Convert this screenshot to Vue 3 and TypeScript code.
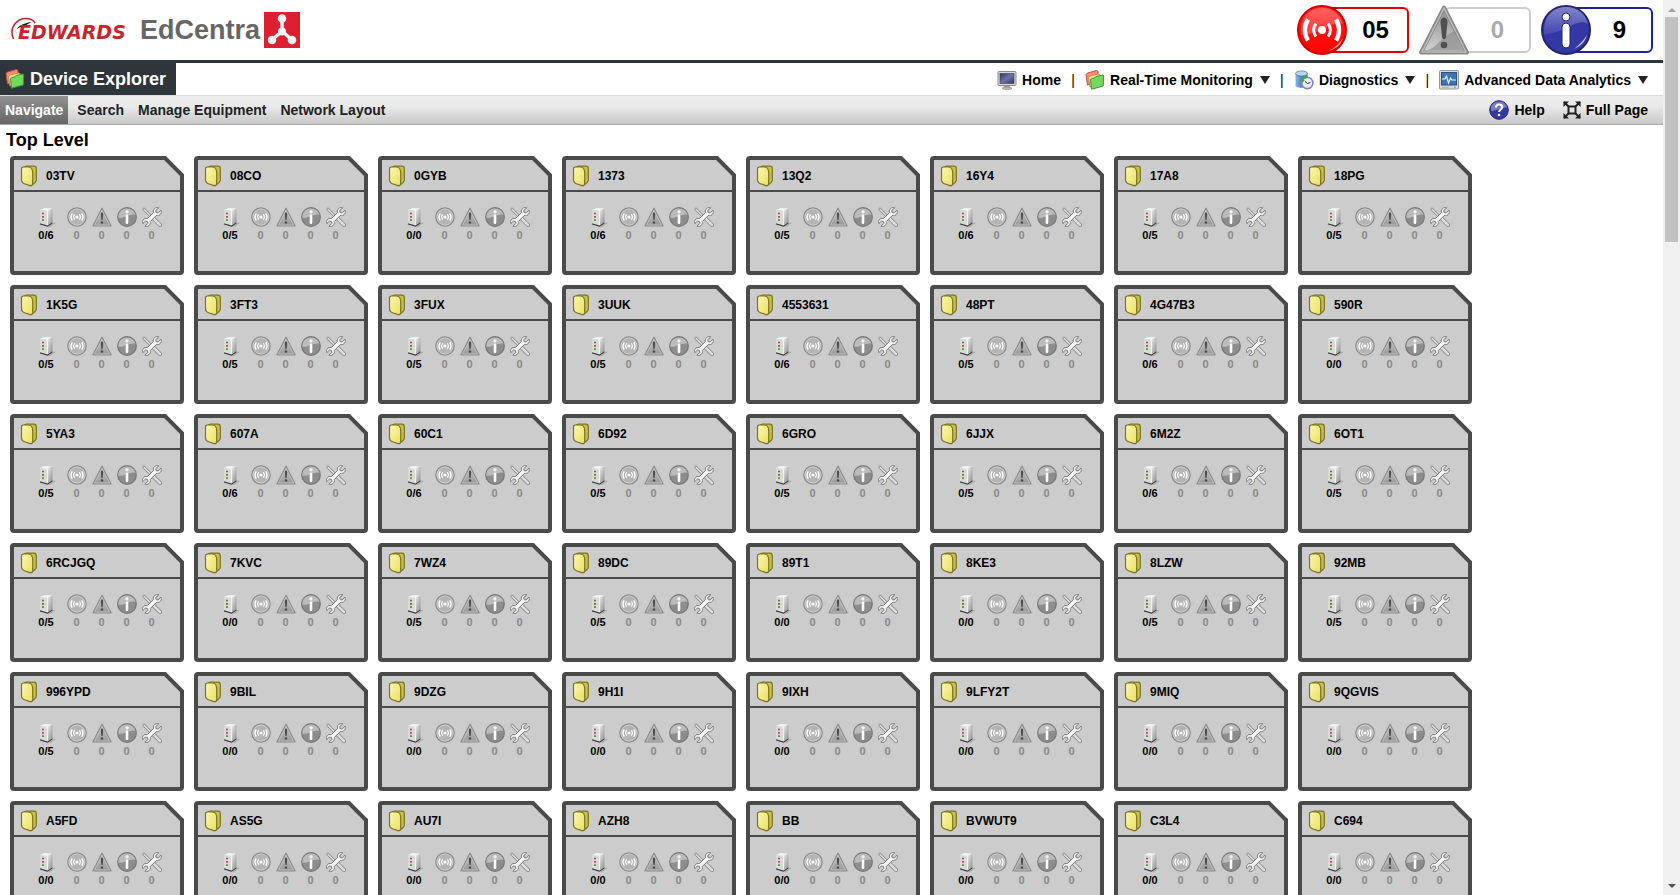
<script setup lang="ts">
interface Device {
  name: string
  online: string
}

const rows: string[] = [
  '03TV:6 08CO:5 0GYB:0 1373:6 13Q2:5 16Y4:6 17A8:5 18PG:5',
  '1K5G:5 3FT3:5 3FUX:5 3UUK:5 4553631:6 48PT:5 4G47B3:6 590R:0',
  '5YA3:5 607A:6 60C1:6 6D92:5 6GRO:5 6JJX:5 6M2Z:6 6OT1:5',
  '6RCJGQ:5 7KVC:0 7WZ4:5 89DC:5 89T1:0 8KE3:0 8LZW:5 92MB:5',
  '996YPD:5 9BIL:0 9DZG:0 9H1I:0 9IXH:0 9LFY2T:0 9MIQ:0 9QGVIS:0',
  'A5FD:0 AS5G:0 AU7I:0 AZH8:0 BB:0 BVWUT9:0 C3L4:0 C694:0',
]

const devices: Device[] = rows
  .flatMap((row) => row.split(' '))
  .map((entry) => {
    const [name, total] = entry.split(':')
    return { name, online: `0/${total}` }
  })

const counters: string[] = ['alarm', 'warning', 'info', 'tools']

const alerts = [
  { kind: 'alarm', label: 'Alarms', count: '05' },
  { kind: 'warning', label: 'Warnings', count: '0' },
  { kind: 'info', label: 'Advisories', count: '9' },
]

const menus = [
  { icon: 'folders', label: 'Real-Time Monitoring' },
  { icon: 'database', label: 'Diagnostics' },
  { icon: 'analytics', label: 'Advanced Data Analytics' },
]

const tabs: string[] = ['Navigate', 'Search', 'Manage Equipment', 'Network Layout']
</script>

<template>
  <svg class="sprite" width="0" height="0" aria-hidden="true">
    <defs>
      <linearGradient id="g-red" x1="0" y1="0" x2="0" y2="1">
        <stop offset="0" stop-color="#ff3a3a" /><stop offset=".45" stop-color="#ff1414" /><stop offset="1" stop-color="#f00" />
      </linearGradient>
      <linearGradient id="g-blue" x1="0" y1="0" x2="0" y2="1">
        <stop offset="0" stop-color="#9496d4" /><stop offset="1" stop-color="#4a4db4" />
      </linearGradient>
      <linearGradient id="g-gray" x1="0" y1="0" x2="0" y2="1">
        <stop offset="0" stop-color="#8f8f8f" /><stop offset="1" stop-color="#d2d2d2" />
      </linearGradient>
      <linearGradient id="g-silver" x1="0" y1="0" x2="0" y2="1">
        <stop offset="0" stop-color="#c4c4c4" /><stop offset="1" stop-color="#999" />
      </linearGradient>
      <linearGradient id="g-side" x1="0" y1="0" x2="1" y2="1">
        <stop offset="0" stop-color="#eee" /><stop offset="1" stop-color="#8a8a8a" />
      </linearGradient>
      <linearGradient id="g-screen" x1="0" y1="0" x2="1" y2="1">
        <stop offset="0" stop-color="#34346a" /><stop offset=".5" stop-color="#6f72a8" /><stop offset="1" stop-color="#30305f" />
      </linearGradient>
      <linearGradient id="g-yellow" x1="0" y1="0" x2="1" y2="1">
        <stop offset="0" stop-color="#fbf8b0" /><stop offset="1" stop-color="#e9df66" />
      </linearGradient>
      <linearGradient id="g-cyl" x1="0" y1="0" x2="1" y2="0">
        <stop offset="0" stop-color="#8ab6e0" /><stop offset=".4" stop-color="#5b8fc8" /><stop offset="1" stop-color="#2c5c98" />
      </linearGradient>
    </defs>

    <symbol id="big-alarm" viewBox="0 0 50 50">
      <circle cx="25" cy="25" r="24" fill="url(#g-red)" stroke="#d40000" stroke-width="2" />
      <path d="M4 22C7 9 15 3 25 3s18 6 21 16C35 15 24 30 4 30z" fill="#fff" opacity=".2" />
      <path d="M32 46c7-2 12-6 14-13-4 6-8 9-14 13z" fill="#fff" opacity=".6" />
      <circle cx="25" cy="25" r="4" fill="#fff" />
      <path d="M19 18.500a10 10 0 0 0 0 13M31 18.500a10 10 0 0 1 0 13" fill="none" stroke="#fff" stroke-width="3" />
      <path d="M11 14.500a20 20 0 0 0 0 21M39 14.500a20 20 0 0 1 0 21" fill="none" stroke="#fff" stroke-width="4.500" />
    </symbol>
    <symbol id="big-warning" viewBox="0 0 50 50">
      <path d="M25 2.500L48 47.500H2z" fill="url(#g-gray)" stroke="#8a8a8a" stroke-width="4" stroke-linejoin="round" />
      <path d="M25 3L47 47H3z" fill="none" stroke="#bdbdbd" stroke-width="1.500" stroke-linejoin="round" />
      <path d="M36 26l9 19H9c10-3 11-12 27-19z" fill="#8b8b8b" opacity=".65" />
      <path d="M21.500 17c0-6 7-6 7 0l-1.500 15c-.5 3-3.500 3-4 0z" fill="#505050" />
      <circle cx="25" cy="40" r="3.300" fill="#505050" />
    </symbol>
    <symbol id="big-info" viewBox="0 0 50 50">
      <circle cx="25" cy="25" r="24" fill="#3338a4" stroke="#24246e" stroke-width="2" />
      <path d="M3 29C2 11 12 2 25 2s20 8 22 17C36 12 25 29 3 29z" fill="url(#g-blue)" opacity=".8" />
      <path d="M33 44c7-3 11-7 13-14-4 6-8 10-13 14z" fill="#b9bcf0" />
      <circle cx="25" cy="12" r="4" fill="#fff" stroke="#25266f" />
      <rect x="21" y="18" width="8" height="25" rx="4" fill="#fff" stroke="#25266f" />
    </symbol>

    <symbol id="small-alarm" viewBox="0 0 20 20">
      <circle cx="10" cy="10" r="9.200" fill="#b4b4b4" stroke="#8d8d8d" stroke-width="1.300" />
      <circle cx="10" cy="10" r="8" fill="none" stroke="#d0d0d0" stroke-width=".8" />
      <circle cx="10" cy="10" r="1.600" fill="#fff" />
      <path d="M7.700 7.400a4 4 0 0 0 0 5.200M12.300 7.400a4 4 0 0 1 0 5.200" fill="none" stroke="#fff" stroke-width="1.200" />
      <path d="M5.200 6.300a7 7 0 0 0 0 7.400M14.800 6.300a7 7 0 0 1 0 7.400" fill="none" stroke="#fff" stroke-width="1.400" />
    </symbol>
    <symbol id="small-warning" viewBox="0 0 20 20">
      <path d="M10 1.300L19 18.800H1z" fill="url(#g-silver)" stroke="#8c8c8c" stroke-width="1.300" stroke-linejoin="round" />
      <path d="M10 3.500L17.500 18H2.500z" fill="none" stroke="#c9c9c9" stroke-width=".7" />
      <path d="M8.800 7c0-2 2.400-2 2.400 0l-.5 5.500c-.2 1-1.200 1-1.400 0z" fill="#4c4c4c" />
      <circle cx="10" cy="15.500" r="1.200" fill="#4c4c4c" />
    </symbol>
    <symbol id="small-info" viewBox="0 0 20 20">
      <circle cx="10" cy="10" r="9.300" fill="#8d8d8d" stroke="#777" stroke-width="1.200" />
      <path d="M1.500 11C1 5 5 1.500 10 1.500S18 5 18.500 8C14 6 9 11 1.500 11z" fill="#bcbcbc" />
      <circle cx="10" cy="4.800" r="1.600" fill="#f4f4f4" />
      <rect x="8.700" y="7.500" width="2.600" height="9.500" rx="1.300" fill="#fff" />
    </symbol>
    <symbol id="small-tools" viewBox="0 0 20 20">
      <path d="M2 2.200l9 9" stroke="#858585" stroke-width="3" stroke-linecap="round" />
      <path d="M2 2.200l9 9" stroke="#e4e4e4" stroke-width="1.400" stroke-linecap="round" />
      <path d="M12 12l6 6" stroke="#858585" stroke-width="4" stroke-linecap="round" />
      <path d="M12 12l6 6" stroke="#dcdcdc" stroke-width="2.500" stroke-linecap="round" />
      <path d="M16.800 .8l-3 2.700 .3 2.200 2.200.3 2.700-2.900c1.200 3.600-1.600 6-4.700 5.400L8.300 14.500c.8 3-1.800 5.700-5.300 4.700l2.800-2.800-.4-2-2-.4L.7 16.700c-1-3.300 1.400-5.900 4.600-5.100L11.400 5.500C10.800 2.300 13.300-.2 16.800 .8z" fill="#f4f4f4" stroke="#777" stroke-width="1" stroke-linejoin="round" />
    </symbol>
    <symbol id="server" viewBox="0 0 20 20">
      <path d="M12 19.500l6.500-4 1 .4-5.500 4z" fill="#888" opacity=".5" />
      <path d="M4 3L8.500 1l8 .6-5 2.400z" fill="#f5f5f5" />
      <path d="M4 3l7.500 1v14.500L4 16.500z" fill="#dadada" />
      <path d="M11.500 4l5-2.400v13.600l-5 3.300z" fill="url(#g-side)" />
      <path d="M11.500 4v14" stroke="#f8f8f8" stroke-width=".8" />
      <path d="M4 16.300l7.500 2.200 5-3.300v1.300l-5 3.300L4 17.500z" fill="#3c3c3c" />
      <path d="M6 6.500h2" stroke="#666" stroke-width="1.500" />
      <path d="M6 9.800h2" stroke="#c04a3c" stroke-width="1.800" />
      <path d="M6 13.200h2" stroke="#4a9c44" stroke-width="1.800" />
    </symbol>
    <symbol id="folder" viewBox="0 0 18 22">
      <path d="M4 2l2-.8h8c1.500 0 2.300 1 2.300 2.500V15c0 1-.3 1.500-1 2.200L12 20z" fill="#c9bd50" stroke="#7d7420" stroke-width="1.200" stroke-linejoin="round" />
      <path d="M3.500 2h4.700c3.300 0 4.500 3 4.500 6v10c0 2-1 3-2.800 2.600L4.500 18.700c-2-.7-3-1.700-3-3.700V4c0-1.300 .7-2 2-2z" fill="url(#g-yellow)" stroke="#7d7420" stroke-width="1.200" stroke-linejoin="round" />
    </symbol>

    <symbol id="folders" viewBox="0 0 20 20">
      <path d="M1 4.500L2.500 3l9-2.500 1.500 1V12L2.500 15z" fill="#f58c84" stroke="#c84840" />
      <path d="M3.500 7.500L5 6l8.500-2 2 1v9L5 17z" fill="#f9e191" stroke="#c8922f" />
      <path d="M5.500 9.500l1.500-1 3-.7 1-1.300L18 5l.7 1-.5 10L6.500 19.200z" fill="#73d95e" stroke="#38983a" />
    </symbol>
    <symbol id="home" viewBox="0 0 20 20">
      <rect x="1" y="1.500" width="18" height="14" rx="1" fill="#d7d7d2" stroke="#8b8b87" />
      <rect x="3" y="3.500" width="14" height="10" fill="url(#g-screen)" stroke="#40405b" stroke-width=".6" />
      <path d="M7.500 16h5l1 2h-7z" fill="#999" />
      <ellipse cx="10" cy="18.300" rx="5" ry="1.200" fill="#bbb" stroke="#888" stroke-width=".6" />
    </symbol>
    <symbol id="database" viewBox="0 0 20 20">
      <path d="M1.500 3.500v12c0 3 12 3 12 0v-12z" fill="url(#g-cyl)" />
      <ellipse cx="7.500" cy="3.500" rx="6" ry="2.600" fill="#b8d5ef" stroke="#4c7db6" stroke-width=".8" />
      <circle cx="13.300" cy="13" r="5.600" fill="#ececf8" stroke="#8485c5" stroke-width="1.600" />
      <path d="M8.300 10.500c.8-2.500 3-3.800 5-3.400" fill="none" stroke="#47ab3e" stroke-width="2" />
      <path d="M6.500 10h4.300l-2.500 3z" fill="#47ab3e" />
      <path d="M11 11.500l2.500 2 3-1" fill="none" stroke="#333" />
    </symbol>
    <symbol id="analytics" viewBox="0 0 20 20">
      <rect x=".5" y=".5" width="19" height="18.500" rx="1" fill="#dcd9d0" stroke="#989898" />
      <rect x="2.500" y="2.500" width="15" height="12.500" fill="#3f73b5" stroke="#285083" />
      <path d="M3 9h3l1.500-3L9.500 13l2-5 1.500 2h4" fill="none" stroke="#e8ffff" stroke-width="1.100" />
      <path d="M3 17.200h7" stroke="#aaa" /><path d="M15 17.200h2" stroke="#6a6" />
    </symbol>
    <symbol id="fullpage" viewBox="0 0 18 18">
      <g fill="none" stroke="#222">
        <rect x="5.500" y="5.500" width="7" height="7" stroke-width="2" />
        <path d="M1 1l4.500 4.500M17 1l-4.500 4.500M1 17l4.500-4.500M17 17l-4.500-4.500" stroke-width="2" />
      </g>
      <path d="M.5 .5h5.500l-5.500 5.500zM17.500 .5v5.500L12 .5zM17.500 17.500H12l5.500-5.500zM.5 17.500V12L6 17.500z" fill="#222" />
    </symbol>
  </svg>

  <div class="shell">
    <div class="page">
      <header class="masthead">
        <div class="brand">
          <svg class="edwards" width="122" height="28" viewBox="0 0 122 28" role="img" aria-label="Edwards">
            <path d="M3.500 23C-2 10 9 1.500 17 2.500c4 .5 6.500 2 8 4.500" fill="none" stroke="#c8242b" stroke-width="1.500" />
            <path d="M6.500 13c3-4 9-6.500 16-7-5 1.500-6 3-7 4.500-4 0-6.500 .8-9 2.500z" fill="#161616" />
            <text x="8" y="23" class="edwards-name">EDWARDS</text>
          </svg>
          <span class="product">EdCentra</span>
          <svg class="molecule" width="36" height="36" viewBox="0 0 36 36" aria-hidden="true">
            <rect width="36" height="36" fill="#dc1f31" />
            <path d="M18 7v12M18 19L8 28M18 19l10 9" stroke="#f4f4f4" stroke-width="3.500" />
            <g fill="#f4f4f4">
              <circle cx="18" cy="6.500" r="4.300" /><circle cx="18" cy="19.500" r="4" />
              <circle cx="8" cy="28" r="4.300" /><circle cx="28" cy="28" r="4.300" />
            </g>
          </svg>
        </div>
        <div class="alerts">
          <button v-for="a in alerts" :key="a.kind" type="button" class="alert" :class="a.kind" :aria-label="a.label">
            <svg class="alert-icon" width="50" height="50"><use :href="`#big-${a.kind}`" /></svg>
            <span class="alert-count">{{ a.count }}</span>
          </button>
        </div>
      </header>

      <div class="mainbar">
        <h1 class="section">
          <svg width="20" height="20"><use href="#folders" /></svg>Device Explorer
        </h1>
        <nav class="menus">
          <a href="#home" class="menu"><svg width="20" height="20"><use href="#home" /></svg>Home</a>
          <template v-for="m in menus" :key="m.label">
            <span class="bar">|</span>
            <button type="button" class="menu">
              <svg width="20" height="20"><use :href="`#${m.icon}`" /></svg>{{ m.label }}<i class="arrow"></i>
            </button>
          </template>
        </nav>
      </div>

      <div class="subbar">
        <nav class="tabs">
          <a v-for="(t, i) in tabs" :key="t" href="#tab" class="tab" :class="{ active: i === 0 }">{{ t }}</a>
        </nav>
        <div class="actions">
          <a href="#help" class="menu">
            <svg width="20" height="20" viewBox="0 0 20 20" aria-hidden="true">
              <circle cx="10" cy="10" r="9.300" fill="#3338a0" stroke="#25266f" />
              <path d="M2 11C1 5 5 1.500 10 1.500S18 5 18 8C14 6 9 11 2 11z" fill="#8a8dd0" opacity=".8" />
              <path d="M7 7.500c0-4 6.500-3.800 6.300-.4-.2 2.400-3.200 2.400-3.200 5" fill="none" stroke="#fff" stroke-width="2" />
              <circle cx="10" cy="15" r="1.300" fill="#fff" />
            </svg>Help
          </a>
          <button type="button" class="menu"><svg width="18" height="18"><use href="#fullpage" /></svg>Full Page</button>
        </div>
      </div>

      <main>
        <h2 class="level">Top Level</h2>
        <ul class="cards">
          <li v-for="d in devices" :key="d.name">
            <a href="#device" class="card">
              <svg class="outline" width="174" height="119" viewBox="0 0 174 119" aria-hidden="true">
                <path d="M4 2H155L172 19V115Q172 117 170 117H4Q2 117 2 115V4Q2 2 4 2z" fill="#ccc" stroke="#4a4a4a" stroke-width="4" />
                <path d="M3 35h168" stroke="#4a4a4a" stroke-width="2" />
              </svg>
              <span class="title"><svg width="18" height="22"><use href="#folder" /></svg>{{ d.name }}</span>
              <span class="stats">
                <span class="stat online"><svg width="20" height="20"><use href="#server" /></svg>{{ d.online }}</span>
                <span v-for="c in counters" :key="c" class="stat">
                  <svg width="20" height="20"><use :href="`#small-${c}`" /></svg>0
                </span>
              </span>
            </a>
          </li>
        </ul>
      </main>
    </div>

    <div class="scrollbar" aria-hidden="true">
      <i class="step up"></i>
      <i class="thumb"></i>
      <i class="step down"></i>
    </div>
  </div>
</template>

<style>
body {
  margin: 0;
  background: #fff;
}
</style>

<style scoped>
.sprite {
  position: absolute;
}
.shell {
  display: grid;
  grid-template-columns: minmax(0, 1fr) 17px;
  height: 100vh;
  overflow: hidden;
  font: bold 14px/20px "Liberation Sans", Arial, sans-serif;
  color: #000;
}
.page {
  min-width: 0;
  overflow: hidden;
}
a,
button {
  color: inherit;
  font: inherit;
  text-decoration: none;
}
button {
  padding: 0;
  border: 0;
  background: none;
  cursor: pointer;
}
svg {
  flex: none;
}
.masthead {
  display: flex;
  justify-content: space-between;
  align-items: center;
  height: 60px;
  padding: 0 10px;
  border-bottom: 3px solid #2f363b;
}
.brand {
  display: flex;
  align-items: center;
}
.edwards-name {
  font: italic bold 19px "DejaVu Sans", sans-serif;
  fill: #c8242b;
}
.product {
  margin-left: 8px;
  font-size: 27px;
  line-height: 36px;
  color: #666;
}
.molecule {
  margin-left: 4px;
}
.alerts {
  display: flex;
  gap: 10px;
}
.alert {
  display: flex;
  align-items: center;
  width: 112px;
}
.alert-icon {
  z-index: 1;
  margin-right: -25px;
}
.alert-count {
  flex: 1;
  box-sizing: border-box;
  height: 46px;
  padding-left: 20px;
  border: 2px solid;
  border-radius: 6px;
  font-size: 24px;
  line-height: 42px;
  text-align: center;
}
.alarm .alert-count {
  border-color: #e00000;
}
.warning .alert-count {
  border-color: #ccc;
  color: #aaa;
}
.info .alert-count {
  border-color: #2222a0;
}
.mainbar {
  display: flex;
  justify-content: space-between;
  height: 32px;
}
.section {
  display: flex;
  align-items: center;
  gap: 5px;
  margin: 0;
  padding: 0 10px 0 5px;
  background: #2f363b;
  color: #fff;
  font-size: 18px;
}
.menus {
  display: flex;
  align-items: center;
  padding: 2px 15px 0 0;
}
.menu {
  display: flex;
  align-items: center;
  gap: 5px;
}
.bar {
  width: 24px;
  text-align: center;
  font-weight: normal;
}
.arrow {
  margin-left: 2px;
  border: solid transparent;
  border-width: 8px 5px 0;
  border-top-color: #222;
}
.subbar {
  display: flex;
  justify-content: space-between;
  box-sizing: border-box;
  height: 30px;
  border-top: 1px solid #ddd;
  border-bottom: 1px solid #aaa;
  background: linear-gradient(#efefef, #e8e8e8 40%, #c8c8c8);
}
.tabs {
  display: flex;
  gap: 4px;
}
.tab {
  padding: 0 5px;
  color: #222;
  line-height: 28px;
}
.tab.active {
  background: linear-gradient(#919191, #666);
  color: #fff;
}
.actions {
  display: flex;
  gap: 18px;
  padding-right: 15px;
}
.level {
  margin: 0;
  padding: 5px 6px 6px;
  font-size: 18px;
  line-height: 20px;
}
.cards {
  display: grid;
  grid-template-columns: repeat(auto-fill, 174px);
  gap: 10px;
  margin: 0;
  padding: 0 10px;
  list-style: none;
}
.card {
  position: relative;
  display: block;
  height: 119px;
  font-size: 12px;
}
.outline {
  position: absolute;
  inset: 0;
}
.title,
.stats {
  position: relative;
  display: flex;
}
.title {
  align-items: center;
  gap: 8px;
  height: 36px;
  padding: 4px 10px 0;
  box-sizing: border-box;
}
.stats {
  padding: 15px 0 0 18px;
}
.stat {
  display: flex;
  flex-direction: column;
  align-items: center;
  width: 25px;
  color: #888;
  font-size: 11px;
  line-height: 16px;
}
.online {
  width: 36px;
  color: #000;
}
.scrollbar {
  display: flex;
  flex-direction: column;
  align-items: center;
  background: #f0f0f0;
}
.step {
  margin: 8px 0 5px;
  border: solid transparent;
  border-width: 0 4px 4px;
}
.up {
  border-bottom-color: #a0a0a0;
}
.down {
  margin: auto 0 7px;
  border-width: 4px 4px 0;
  border-top-color: #505050;
}
.thumb {
  width: 13px;
  height: 225px;
  background: #c1c1c1;
}
</style>
